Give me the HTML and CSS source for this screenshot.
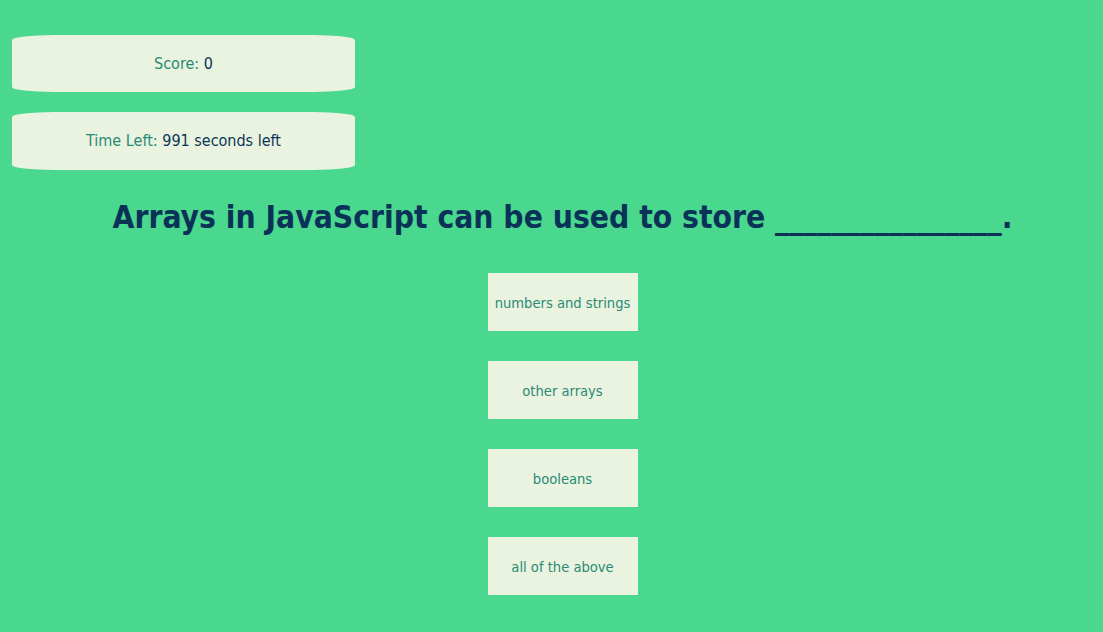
FILE: index.html
```html
<!DOCTYPE html>
<html>
<head>
<meta charset="utf-8">
<link rel="stylesheet" href="styles.css">
</head>
<body>
<div class="page">
  <div class="stats">
    <div class="stat"><p class="stat-text"><span class="label">Score:</span> <span class="value">0</span></p></div>
    <div class="stat"><p class="stat-text"><span class="label">Time Left:</span> <span class="value">991 seconds left</span></p></div>
  </div>
  <div class="quiz">
    <h1 class="question">Arrays in JavaScript can be used to store ________________.</h1>
    <div class="answers">
      <button class="answer">numbers and strings</button>
      <button class="answer">other arrays</button>
      <button class="answer">booleans</button>
      <button class="answer">all of the above</button>
    </div>
  </div>
</div>
</body>
</html>
```

FILE: styles.css
```css
html, body {
  margin: 0;
  padding: 0;
  background: #4ad78e;
}
body {
  font-family: "DejaVu Sans Condensed", "DejaVu Sans", sans-serif;
  font-stretch: condensed;
}
.page {
  padding: 35px 0 0 12px;
}
.stats {
  display: flex;
  flex-direction: column;
  gap: 20px;
  width: 343px;
}
.stat {
  height: 57px;
  background: #e9f3df;
  border-radius: 42px / 5px;
  display: flex;
  align-items: center;
  justify-content: center;
}
.stat + .stat {
  height: 58px;
}
.stat-text {
  margin: 0;
  font-size: 16px;
  line-height: 20px;
}
.label { color: #2a8a76; }
.value { color: #0b3558; }
.quiz {
  padding-left: 10px;
  display: flex;
  flex-direction: column;
  align-items: center;
}
.question {
  margin: 27px 0 0 0;
  font-size: 31.5px;
  line-height: 40px;
  font-weight: bold;
  color: #0a3258;
}
.answers {
  margin-top: 36px;
  display: flex;
  flex-direction: column;
  gap: 30px;
}
.answer {
  width: 150px;
  height: 58px;
  border: none;
  padding: 0;
  background: #e9f3df;
  color: #2a8a76;
  font-family: inherit;
  font-stretch: condensed;
  font-size: 14.6px;
}
```
